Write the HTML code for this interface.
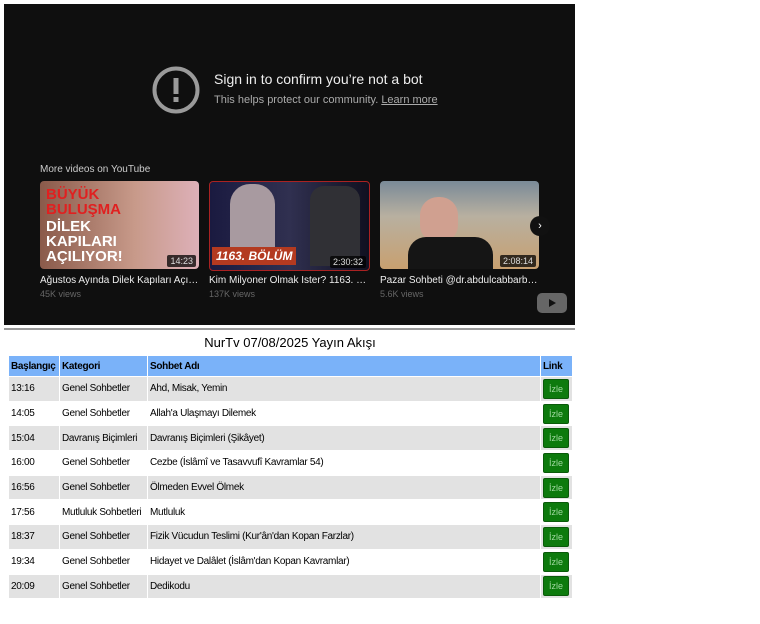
<!DOCTYPE html>
<html><head><meta charset="utf-8"><style>
body{margin:0;background:#fff;width:760px;height:600px;overflow:hidden;font-family:"Liberation Sans",Arial,sans-serif;}
.yt{position:absolute;left:4px;top:4px;width:571px;height:321px;background:#0f0f0f;color:#fff;font-family:"Liberation Sans",sans-serif;}
.hr{position:absolute;left:4px;top:328px;width:571px;height:2px;background:#999;}
.th{position:absolute;top:177px;width:159px;height:88px;border-radius:4px;overflow:hidden;}
.dur{position:absolute;right:3px;bottom:2px;background:rgba(0,0,0,.75);font-size:9px;padding:1px 3px;border-radius:2px;color:#ddd}
.tt{position:absolute;top:271px;font-size:10px;color:#eee;width:160px;white-space:nowrap;overflow:hidden;text-overflow:ellipsis}
.vw{position:absolute;top:285px;font-size:9px;color:#666}
h1{position:absolute;left:0;width:580px;top:335px;margin:0;font-size:13px;font-weight:normal;text-align:center;color:#000}
table{position:absolute;left:8px;top:355px;width:564px;border-collapse:collapse;font-size:10px;letter-spacing:-0.3px;table-layout:fixed}
td,th{border:1px solid #fff;padding:0 2px;height:23.7px;text-align:left;color:#000;white-space:nowrap;overflow:hidden}
th{background:#7ab2f9;font-weight:bold;height:20px}
tr:nth-child(even) td{background:#e2e2e2}
tr:nth-child(odd) td{background:#fff}
.b{display:inline-block;background:#0d7a0d;color:#9fd79f;font-size:9px;padding:4px 5px;border-radius:2px;border:1px solid #0a5a0a;letter-spacing:0}
</style></head><body>
<div class="yt">
 <svg style="position:absolute;left:148px;top:62px" width="48" height="48" viewBox="0 0 48 48"><circle cx="24" cy="24" r="21.5" fill="none" stroke="#9a9a9a" stroke-width="4"/><rect x="21.5" y="12" width="5" height="16" fill="#9a9a9a"/><rect x="21.5" y="31" width="5" height="5" fill="#9a9a9a"/></svg>
 <div style="position:absolute;left:210px;top:67px;font-size:14px;color:#eee">Sign in to confirm you’re not a bot</div>
 <div style="position:absolute;left:210px;top:90px;font-size:11px;color:#aaa">This helps protect our community. <span style="text-decoration:underline">Learn more</span></div>
 <div style="position:absolute;left:36px;top:160px;font-size:10px;color:#ccc">More videos on YouTube</div>
 <div class="th" style="left:36px;background:linear-gradient(90deg,#8a5a4a 0%,#c89a8a 60%,#ddb0b8 100%)">
  <div style="position:absolute;left:6px;top:6px;font:bold 15px/15px 'Liberation Sans';color:#e02020">BÜYÜK<br>BULUŞMA</div>
  <div style="position:absolute;left:6px;top:38px;font:bold 15px/15px 'Liberation Sans';color:#fff">DİLEK<br>KAPILARI<br>AÇILIYOR!</div>
  <span class="dur">14:23</span></div>
 <div class="th" style="left:205px;background:linear-gradient(90deg,#1a1a40,#303050 50%,#101020);border:1px solid #a22">
  <div style="position:absolute;left:20px;top:2px;width:45px;height:68px;background:#a89aa0;border-radius:20px 20px 4px 4px"></div>
  <div style="position:absolute;left:100px;top:4px;width:50px;height:80px;background:#303035;border-radius:14px 14px 0 0"></div>
  <div style="position:absolute;left:2px;top:65px;background:#b33a20;color:#fff;font:bold italic 12px 'Liberation Sans';padding:2px 4px">1163. BÖLÜM</div>
  <span class="dur">2:30:32</span></div>
 <div class="th" style="left:376px;background:linear-gradient(180deg,#7a8a98 0%,#b8b0a0 40%,#c8a070 100%)">
  <div style="position:absolute;left:40px;top:16px;width:38px;height:46px;background:#d0a090;border-radius:18px"></div>
  <div style="position:absolute;left:28px;top:56px;width:85px;height:40px;background:#151515;border-radius:18px 18px 0 0"></div>
  <span class="dur">2:08:14</span></div>
 <div style="position:absolute;left:526px;top:212px;width:20px;height:20px;border-radius:50%;background:#111;color:#fff;font-size:11px;text-align:center;line-height:20px">›</div>
 <div class="tt" style="left:36px">Ağustos Ayında Dilek Kapıları Açılıyor</div>
 <div class="tt" style="left:205px">Kim Milyoner Olmak İster? 1163. Bölüm</div>
 <div class="tt" style="left:376px">Pazar Sohbeti @dr.abdulcabbarboran</div>
 <div class="vw" style="left:36px">45K views</div><div class="vw" style="left:205px">137K views</div><div class="vw" style="left:376px">5.6K views</div>
 <div style="position:absolute;left:533px;top:289px;width:30px;height:20px;background:#666;border-radius:5px"><svg width="30" height="20"><path d="M12 6 L19 10 L12 14Z" fill="#111"/></svg></div>
</div>
<div class="hr"></div>
<h1>NurTv 07/08/2025 Yayın Akışı</h1>
<table>
<colgroup><col style="width:51px"><col style="width:88px"><col style="width:393px"><col style="width:32px"></colgroup>
<tr><th>Başlangıç</th><th>Kategori</th><th>Sohbet Adı</th><th>Link</th></tr>
<tr><td>13:16</td><td>Genel Sohbetler</td><td>Ahd, Misak, Yemin</td><td><span class="b">İzle</span></td></tr>
<tr><td>14:05</td><td>Genel Sohbetler</td><td>Allah'a Ulaşmayı Dilemek</td><td><span class="b">İzle</span></td></tr>
<tr><td>15:04</td><td>Davranış Biçimleri</td><td>Davranış Biçimleri (Şikâyet)</td><td><span class="b">İzle</span></td></tr>
<tr><td>16:00</td><td>Genel Sohbetler</td><td>Cezbe (İslâmî ve Tasavvufî Kavramlar 54)</td><td><span class="b">İzle</span></td></tr>
<tr><td>16:56</td><td>Genel Sohbetler</td><td>Ölmeden Evvel Ölmek</td><td><span class="b">İzle</span></td></tr>
<tr><td>17:56</td><td>Mutluluk Sohbetleri</td><td>Mutluluk</td><td><span class="b">İzle</span></td></tr>
<tr><td>18:37</td><td>Genel Sohbetler</td><td>Fizik Vücudun Teslimi (Kur'ân'dan Kopan Farzlar)</td><td><span class="b">İzle</span></td></tr>
<tr><td>19:34</td><td>Genel Sohbetler</td><td>Hidayet ve Dalâlet (İslâm'dan Kopan Kavramlar)</td><td><span class="b">İzle</span></td></tr>
<tr><td>20:09</td><td>Genel Sohbetler</td><td>Dedikodu</td><td><span class="b">İzle</span></td></tr>
<tr><td>&nbsp;</td><td></td><td></td><td></td></tr>
</table>
</body></html>
